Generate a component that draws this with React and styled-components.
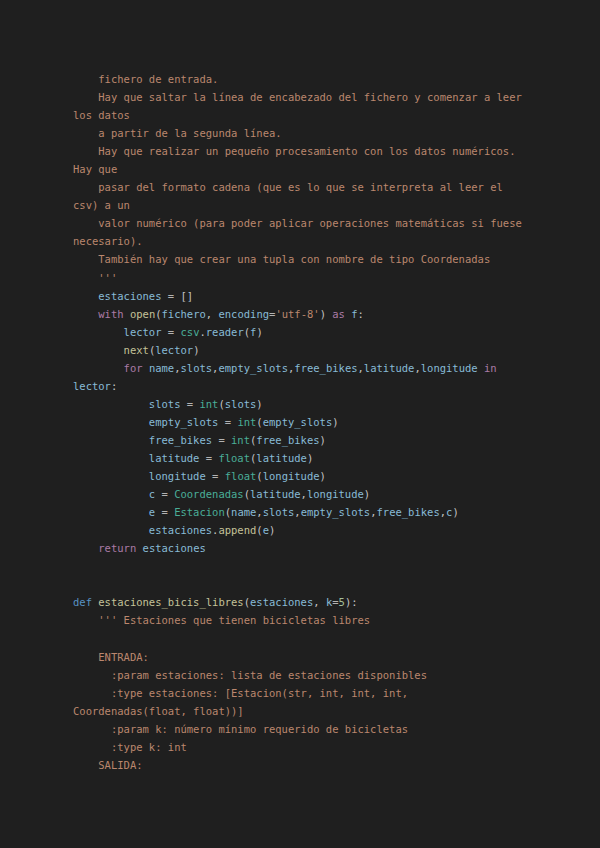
import React from "react";
import styled, { createGlobalStyle } from "styled-components";

const GlobalStyle = createGlobalStyle`
  html, body {
    margin: 0;
    padding: 0;
    background: #1f1f1f;
  }
`;

const colors = {
  str: "#bb876e",
  var: "#88bbd6",
  kw: "#ab7ba6",
  def: "#5892c2",
  fn: "#c4c299",
  cls: "#4aae98",
  num: "#a5bf9c",
  op: "#b3b3b3",
  p: "#c4c4c4",
};

const Page = styled.div`
  width: 600px;
  height: 848px;
  background: #1f1f1f;
  box-sizing: border-box;
  padding: 70px 40px 0 73px;
  overflow: hidden;
`;

const Code = styled.pre`
  margin: 0;
  font-family: "DejaVu Sans Mono", "Liberation Mono", monospace;
  font-size: 10.5px;
  line-height: 18.05px;
  white-space: pre;
`;

const Line = styled.div`
  height: 18.05px;
`;

const Tok = styled.span`
  color: ${(p) => colors[p.$kind] || colors.p};
`;

const s = (t) => ["str", t];
const v = (t) => ["var", t];
const k = (t) => ["kw", t];
const f = (t) => ["fn", t];
const c = (t) => ["cls", t];
const o = (t) => ["op", t];
const p = (t) => ["p", t];

const lines = [
  [s("    fichero de entrada.")],
  [s("    Hay que saltar la línea de encabezado del fichero y comenzar a leer")],
  [s("los datos")],
  [s("    a partir de la segunda línea.")],
  [s("    Hay que realizar un pequeño procesamiento con los datos numéricos.")],
  [s("Hay que")],
  [s("    pasar del formato cadena (que es lo que se interpreta al leer el")],
  [s("csv) a un")],
  [s("    valor numérico (para poder aplicar operaciones matemáticas si fuese")],
  [s("necesario).")],
  [s("    También hay que crear una tupla con nombre de tipo Coordenadas")],
  [s("    '''")],
  [p("    "), v("estaciones"), o(" = "), p("[]")],
  [p("    "), k("with"), p(" "), f("open"), p("("), v("fichero"), p(", "), v("encoding"), o("="), s("'utf-8'"), p(") "), k("as"), p(" "), v("f"), p(":")],
  [p("        "), v("lector"), o(" = "), c("csv"), p("."), v("reader"), p("("), v("f"), p(")")],
  [p("        "), f("next"), p("("), v("lector"), p(")")],
  [p("        "), k("for"), p(" "), v("name"), p(","), v("slots"), p(","), v("empty_slots"), p(","), v("free_bikes"), p(","), v("latitude"), p(","), v("longitude"), p(" "), k("in")],
  [v("lector"), p(":")],
  [p("            "), v("slots"), o(" = "), c("int"), p("("), v("slots"), p(")")],
  [p("            "), v("empty_slots"), o(" = "), c("int"), p("("), v("empty_slots"), p(")")],
  [p("            "), v("free_bikes"), o(" = "), c("int"), p("("), v("free_bikes"), p(")")],
  [p("            "), v("latitude"), o(" = "), c("float"), p("("), v("latitude"), p(")")],
  [p("            "), v("longitude"), o(" = "), c("float"), p("("), v("longitude"), p(")")],
  [p("            "), v("c"), o(" = "), c("Coordenadas"), p("("), v("latitude"), p(","), v("longitude"), p(")")],
  [p("            "), v("e"), o(" = "), c("Estacion"), p("("), v("name"), p(","), v("slots"), p(","), v("empty_slots"), p(","), v("free_bikes"), p(","), v("c"), p(")")],
  [p("            "), v("estaciones"), p("."), f("append"), p("("), v("e"), p(")")],
  [p("    "), k("return"), p(" "), v("estaciones")],
  [],
  [],
  [["def", "def"], p(" "), f("estaciones_bicis_libres"), p("("), v("estaciones"), p(", "), v("k"), o("="), ["num", "5"], p("):")],
  [s("    ''' Estaciones que tienen bicicletas libres")],
  [],
  [s("    ENTRADA:")],
  [s("      :param estaciones: lista de estaciones disponibles")],
  [s("      :type estaciones: [Estacion(str, int, int, int,")],
  [s("Coordenadas(float, float))]")],
  [s("      :param k: número mínimo requerido de bicicletas")],
  [s("      :type k: int")],
  [s("    SALIDA:")],
];

export default function App() {
  return (
    <>
      <GlobalStyle />
      <Page>
        <Code>
          {lines.map((line, i) => (
            <Line key={i}>
              {line.map(([kind, text], j) => (
                <Tok key={j} $kind={kind}>
                  {text}
                </Tok>
              ))}
            </Line>
          ))}
        </Code>
      </Page>
    </>
  );
}
